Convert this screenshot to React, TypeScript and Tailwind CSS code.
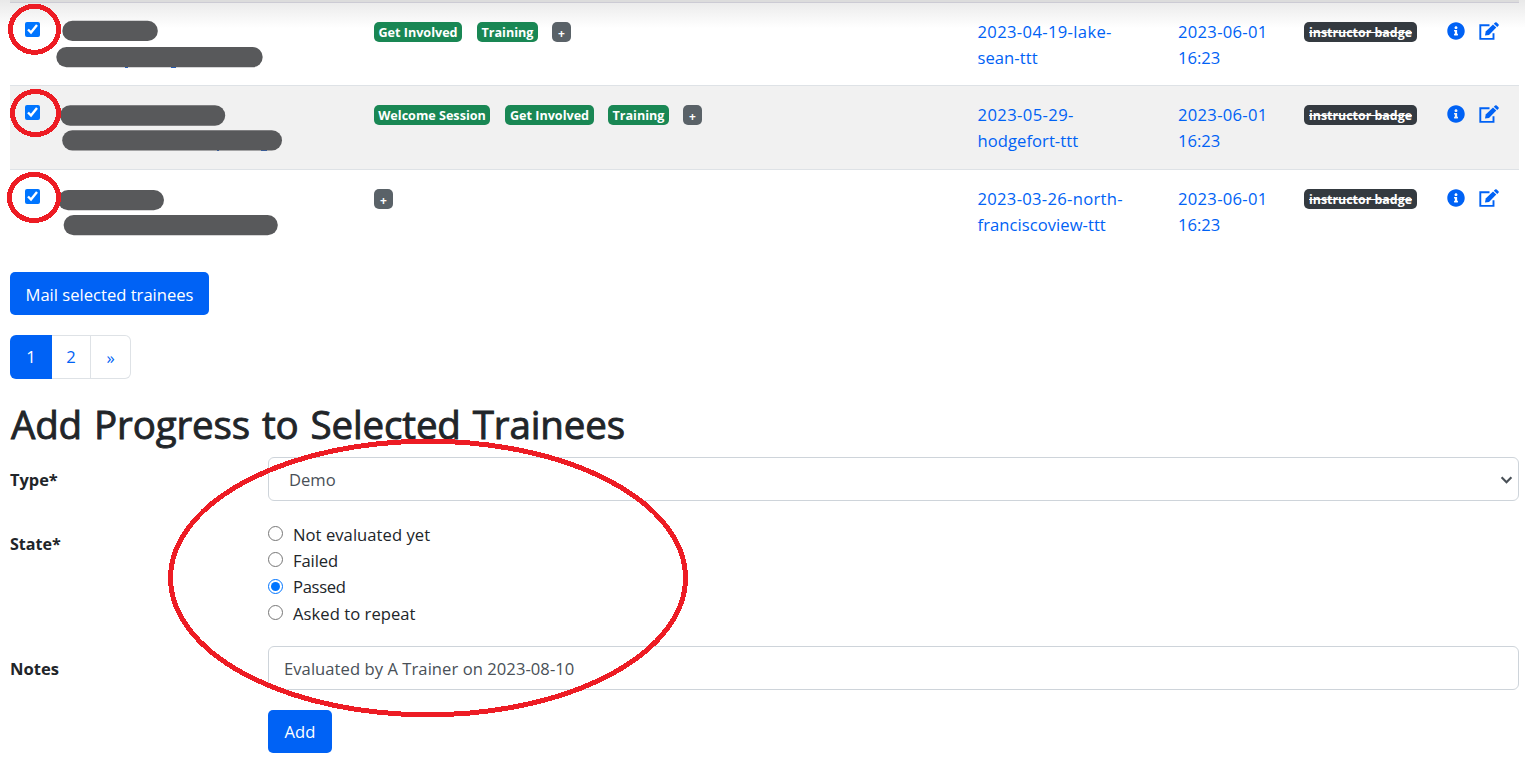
import React from "react";
import { FaInfoCircle } from "react-icons/fa";

type Trainee = { progress: { label: string; cls: string }[]; event: [string, string]; eventCls: string; height: string };

const trainees: Trainee[] = [
  {
    progress: [
      { label: "Get Involved", cls: "w-[88px] mr-[15px]" },
      { label: "Training", cls: "w-[61px] mr-[14px]" },
    ],
    event: ["2023-04-19-lake-", "sean-ttt"],
    eventCls: "tracking-[0.35px]",
    height: "h-[83px] border-b",
  },
  {
    progress: [
      { label: "Welcome Session", cls: "w-[116px] mr-[15px]" },
      { label: "Get Involved", cls: "w-[89px] mr-[14px]" },
      { label: "Training", cls: "w-[61px] mr-[14px]" },
    ],
    event: ["2023-05-29-", "hodgefort-ttt"],
    eventCls: "tracking-[0.4px]",
    height: "h-[84px] border-b bg-[#f1f1f1]",
  },
  {
    progress: [],
    event: ["2023-03-26-north-", "franciscoview-ttt"],
    eventCls: "tracking-[0.3px]",
    height: "h-[84px]",
  },
];

const badge = "flex h-5 items-center justify-center rounded-[5px] text-white font-bold leading-none whitespace-nowrap";

function EditIcon() {
  return (
    <svg width="21" height="18" viewBox="0 0 21 18">
      <path d="M10.5 3.2H1.3V16.9H14.5V11.2" fill="none" stroke="currentColor" strokeWidth="1.9" />
      <path d="M6 13.4 6.7 9.6 14 2.4 17.3 5.6 10 12.9Z" fill="currentColor" />
      <path d="M14.8 1.7 16.1.5Q16.9-.2 17.7.5L19.5 2.2Q20.2 3 19.5 3.7L18.2 5Z" fill="currentColor" />
    </svg>
  );
}

function Row({ t }: { t: Trainee }) {
  return (
    <div className={`flex items-start border-[#dee2e6] ${t.height}`}>
      <div className="w-[364px] pt-[19px] pl-[15px]">
        <input type="checkbox" defaultChecked className="block size-[15px] accent-[#0075ff]" />
      </div>
      <div className="flex w-[603.5px] pt-[19px]">
        {t.progress.map((p) => (
          <span key={p.label} className={`${badge} bg-[#198754] pt-[3px] text-[12.6px] ${p.cls}`}>{p.label}</span>
        ))}
        <span className={`${badge} w-[19px] bg-[#5a6268] pt-[4px] text-[12px]`}>+</span>
      </div>
      <div className={`w-[200.5px] pt-[15.5px] whitespace-nowrap text-[#0062f5] ${t.eventCls}`}>
        <div>{t.event[0]}</div>
        <div className="tracking-[0.05px]">{t.event[1]}</div>
      </div>
      <div className="w-[126px] pt-[15.5px] whitespace-nowrap text-[#0062f5]">
        <div className="tracking-[0.3px]">2023-06-01</div>
        <div>16:23</div>
      </div>
      <div className="w-[143px] pt-[19px]">
        <span className={`${badge} w-[113px] bg-[#343a40] pt-[3px] text-[12.4px] line-through`}>instructor badge</span>
      </div>
      <div className="flex gap-[13.5px] pt-[19px] text-[#0062f5]">
        <FaInfoCircle className="size-[18px]" />
        <EditIcon />
      </div>
    </div>
  );
}

const states = [
  { label: "Not evaluated yet", offset: "mt-[4px]", text: "tracking-[0.05px]" },
  { label: "Failed", offset: "mt-[4px]", text: "tracking-[-0.1px]" },
  { label: "Passed", offset: "mt-[4.7px]", text: "tracking-[-0.3px]" },
  { label: "Asked to repeat", offset: "mt-[4px]", text: "tracking-[0.05px]" },
];

function Annotations() {
  return (
    <svg className="pointer-events-none absolute top-0 left-0" width="700" height="773" viewBox="0 0 700 773">
      <g fill="#1a5fd0">
        <rect x="125" y="66" width="3" height="2" />
        <rect x="171" y="66" width="5" height="2" />
        <rect x="217" y="150" width="2" height="1" />
        <rect x="261" y="150" width="6" height="1" />
      </g>
      <g fill="#58595b">
        <rect x="62.3" y="20.8" width="95.5" height="20.2" rx="10.1" />
        <rect x="56.3" y="47" width="206.4" height="20.2" rx="10.1" />
        <rect x="60" y="105.3" width="165.2" height="20.4" rx="10.2" />
        <rect x="62.2" y="130.3" width="219.8" height="20.2" rx="10.1" />
        <rect x="58" y="190" width="106" height="20.2" rx="10.1" />
        <rect x="63.6" y="215" width="214.2" height="20.2" rx="10.1" />
      </g>
      <g fill="none" stroke="#ed1c24" strokeWidth="5" shapeRendering="crispEdges">
        <ellipse cx="34.5" cy="29.3" rx="24" ry="23" />
        <ellipse cx="35.5" cy="113" rx="23" ry="21.5" />
        <ellipse cx="34" cy="197.5" rx="24.5" ry="23" />
        <ellipse cx="428" cy="578" rx="257.5" ry="136.8" />
      </g>
    </svg>
  );
}

export default function App() {
  return (
    <div className="relative h-[773px] w-[1525px] overflow-hidden bg-white font-['Open_Sans',sans-serif] text-[16.6px] leading-[26.2px] text-[#212529]">
      <div className="absolute top-0 left-0 h-[28px] w-full bg-linear-to-b from-[#e9e9e9] to-white" />
      <main className="relative pr-[6px] pl-[10px]">
        <div className="h-[3px] border-b border-[#cccbd4] bg-[#dcdcdc]" />
        {trainees.map((t) => (
          <Row key={t.event[0]} t={t} />
        ))}
        <button className="mt-[18px] block h-[43px] w-[199px] rounded-[5px] bg-[#0062f5] pt-[3px] whitespace-nowrap text-white">Mail selected trainees</button>
        <nav className="mt-5 flex h-11 w-[121px] text-[#0062f5]">
          <span className="flex w-[42px] items-center justify-center rounded-l-[6px] bg-[#0062f5] pt-[1px] text-white">1</span>
          <span className="flex w-[39px] items-center justify-center border-y border-r border-[#dee2e6] pt-[1px]">2</span>
          <span className="flex flex-1 items-center justify-center rounded-r-[6px] border-y border-r border-[#dee2e6] pt-[2px]">»</span>
        </nav>
        <h1 className="mt-[21px] h-[57px] pl-[1px] text-[38.5px] leading-[48px] font-medium tracking-[-0.15px] whitespace-nowrap [-webkit-text-stroke:0.9px_#212529] [word-spacing:2.2px]">Add Progress to Selected Trainees</h1>
        <form>
          <div className="flex h-[44px]">
            <label className="w-[258px] pt-[9.5px] text-[16.4px] font-bold">Type*</label>
            <div className="flex flex-1 items-center justify-between rounded-[6px] border border-[#ced4da] bg-white pr-[5px] pl-[20px] text-[#495057]">
              <span className="pt-[3px]">Demo</span>
              <svg className="mt-[2px]" width="13" height="8" viewBox="0 0 13 8" fill="none" stroke="#495057" strokeWidth="2.2"><path d="M1.6 1.3 6.5 6.2 11.4 1.3" /></svg>
            </div>
          </div>
          <div className="mt-[21px] flex h-[104px]">
            <div className="w-[258px] pt-[8.5px] text-[16.1px] font-bold">State*</div>
            <div className="flex flex-col">
              {states.map((s) => (
                <label key={s.label} className="flex h-[26.4px] gap-[10px]">
                  <input type="radio" name="state" defaultChecked={s.label === "Passed"} className={`block size-[15px] accent-[#0075ff] ${s.offset}`} />
                  <span className={`whitespace-nowrap ${s.text}`}>{s.label}</span>
                </label>
              ))}
            </div>
          </div>
          <div className="mt-[20px] flex h-[44px]">
            <label className="w-[258px] pt-[9.5px] font-bold">Notes</label>
            <div className="flex flex-1 items-center rounded-[6px] border border-[#ced4da] bg-white pl-[15px] text-[#495057]">
              <span className="pt-[2px] tracking-[0.05px]">Evaluated by A Trainer on 2023-08-10</span>
            </div>
          </div>
          <div className="mt-5 flex pl-[258px]">
            <button type="button" className="h-[43px] w-[64px] rounded-[5px] bg-[#0062f5] pt-[2px] text-white">Add</button>
          </div>
        </form>
      </main>
      <Annotations />
    </div>
  );
}
